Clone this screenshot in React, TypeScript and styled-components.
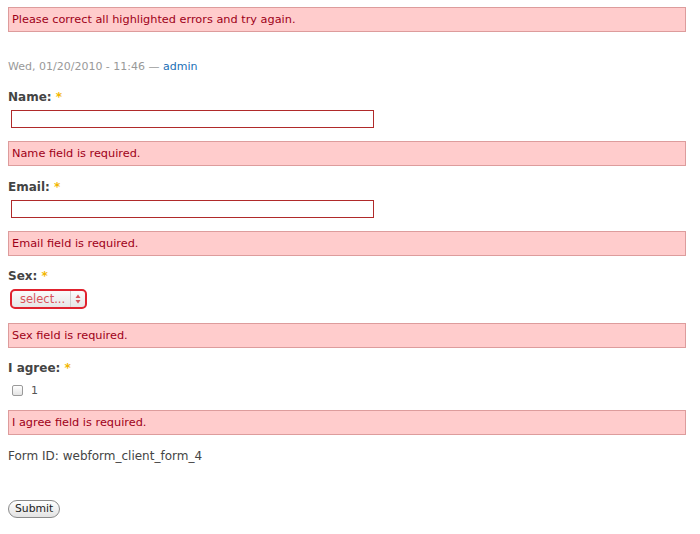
import React from 'react';
import styled, { createGlobalStyle } from 'styled-components';

const GlobalStyle = createGlobalStyle`
  html, body {
    margin: 0;
    padding: 0;
    background: #fff;
  }
  body {
    font-family: "DejaVu Sans", Verdana, sans-serif;
    font-size: 12px;
    color: #494949;
  }
`;

const Page = styled.div`
  padding: 7px 14px 16px 8px;
`;

const ErrorBox = styled.div<{ $top?: number }>`
  margin-top: ${({ $top }) => $top ?? 0}px;
  background: #ffcccc;
  border: 1px solid #dd9c9c;
  color: #9e0018;
  font-size: 11.3px;
  line-height: 19px;
  padding: 2px 3px;
`;

const Meta = styled.div`
  margin-top: 27px;
  font-size: 11px;
  line-height: 16px;
  color: #999;

  a {
    color: #1a6fb5;
    text-decoration: none;
  }
`;

const Field = styled.div<{ $top: number }>`
  margin-top: ${({ $top }) => $top}px;
`;

const Label = styled.label`
  display: block;
  font-weight: bold;
  font-size: 12px;
  line-height: 16px;
  color: #444;
`;

const Required = styled.span`
  color: #f2b600;
`;

const TextInput = styled.input`
  display: block;
  box-sizing: border-box;
  margin: 5px 0 0 3px;
  width: 363px;
  height: 18px;
  border: 1px solid #b02a2a;
  padding: 0 3px;
  font: inherit;
  outline: none;
`;

const SelectFrame = styled.div`
  display: flex;
  align-items: stretch;
  box-sizing: border-box;
  margin: 5px 0 0 2px;
  width: 77px;
  height: 20px;
  border: 2px solid #e0222e;
  border-radius: 5px;
  background: linear-gradient(#fbfbfb, #e6e6e6);
  overflow: hidden;
`;

const SelectBox = styled.select`
  appearance: none;
  -webkit-appearance: none;
  flex: 1;
  min-width: 0;
  border: none;
  background: transparent;
  font-family: "DejaVu Sans", Verdana, sans-serif;
  font-size: 11.5px;
  color: #d9535b;
  padding: 0 0 0 8px;
  outline: none;
`;

const SelectArrows = styled.span`
  display: flex;
  align-items: center;
  justify-content: center;
  width: 14px;
  border-left: 1px solid #cfcfcf;
`;

const CheckRow = styled.div`
  display: flex;
  align-items: center;
  gap: 8px;
  margin: 6px 0 0 4px;
  height: 16px;
  font-size: 11px;
  color: #555;
`;

const Checkbox = styled.input`
  appearance: none;
  -webkit-appearance: none;
  margin: 0;
  width: 11px;
  height: 11px;
  border: 1px solid #9a9a9a;
  border-radius: 2px;
  background: linear-gradient(#fff, #e4e4e4);
`;

const FormId = styled.div`
  margin-top: 13px;
  font-size: 12px;
  line-height: 16px;
  color: #444;
`;

const SubmitButton = styled.button`
  display: block;
  margin-top: 36px;
  height: 18px;
  padding: 0 6px;
  border: 1px solid #8a8a8a;
  border-radius: 9px;
  background: linear-gradient(#ffffff, #e3e3e3);
  font-family: "DejaVu Sans", Verdana, sans-serif;
  font-size: 10.8px;
  line-height: 16px;
  color: #222;
`;

function Arrows() {
  return (
    <svg width="6" height="10" viewBox="0 0 6 10">
      <path d="M3 0.5 L5.5 4 L0.5 4 Z" fill="#d9535b" />
      <path d="M3 9.5 L5.5 6 L0.5 6 Z" fill="#d9535b" />
    </svg>
  );
}

export default function App() {
  return (
    <>
      <GlobalStyle />
      <Page>
        <ErrorBox>Please correct all highlighted errors and try again.</ErrorBox>
        <Meta>
          Wed, 01/20/2010 - 11:46 — <a href="#">admin</a>
        </Meta>

        <Field $top={14}>
          <Label>Name: <Required>*</Required></Label>
          <TextInput type="text" />
          <ErrorBox $top={13}>Name field is required.</ErrorBox>
        </Field>

        <Field $top={13}>
          <Label>Email: <Required>*</Required></Label>
          <TextInput type="text" />
          <ErrorBox $top={13}>Email field is required.</ErrorBox>
        </Field>

        <Field $top={12}>
          <Label>Sex: <Required>*</Required></Label>
          <SelectFrame>
            <SelectBox defaultValue="">
              <option value="">select...</option>
              <option value="m">Male</option>
              <option value="f">Female</option>
            </SelectBox>
            <SelectArrows><Arrows /></SelectArrows>
          </SelectFrame>
          <ErrorBox $top={14}>Sex field is required.</ErrorBox>
        </Field>

        <Field $top={12}>
          <Label>I agree: <Required>*</Required></Label>
          <CheckRow>
            <Checkbox type="checkbox" />
            <span>1</span>
          </CheckRow>
          <ErrorBox $top={12}>I agree field is required.</ErrorBox>
        </Field>

        <FormId>Form ID: webform_client_form_4</FormId>
        <SubmitButton type="submit">Submit</SubmitButton>
      </Page>
    </>
  );
}
